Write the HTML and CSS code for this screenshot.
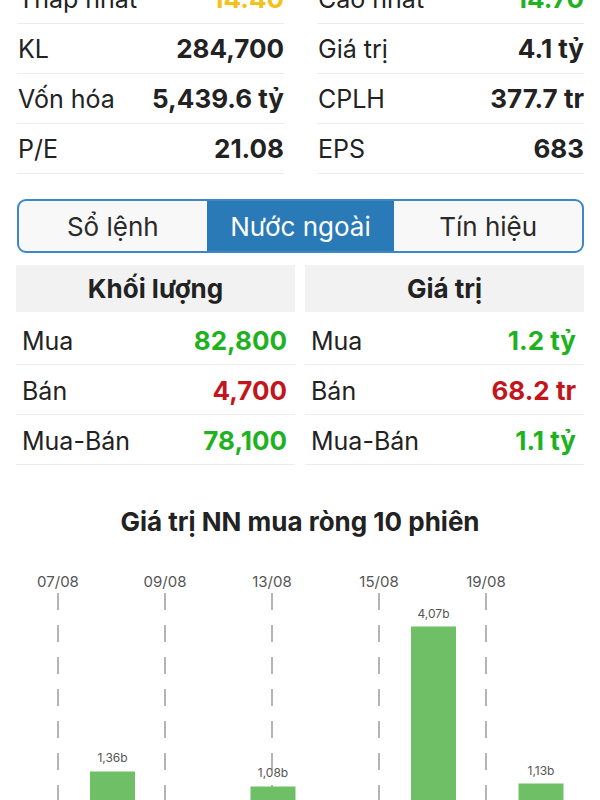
FILE: index.html
```html
<!DOCTYPE html>
<html lang="vi">
<head>
    <meta charset="UTF-8">
    <meta name="viewport" content="width=device-width, initial-scale=1.0">
    <title>Nước ngoài</title>
    <link rel="stylesheet" href="styles.css">
</head>
<body>
    <div class="stats">
        <div class="stat-col">
            <div class="stat-row"><span class="label">Thấp nhất</span><span class="value yellow">14.40</span></div>
            <div class="stat-row"><span class="label">KL</span><span class="value">284,700</span></div>
            <div class="stat-row"><span class="label">Vốn hóa</span><span class="value">5,439.6 tỷ</span></div>
            <div class="stat-row"><span class="label">P/E</span><span class="value">21.08</span></div>
        </div>
        <div class="stat-col">
            <div class="stat-row"><span class="label">Cao nhất</span><span class="value green">14.70</span></div>
            <div class="stat-row"><span class="label">Giá trị</span><span class="value">4.1 tỷ</span></div>
            <div class="stat-row"><span class="label">CPLH</span><span class="value">377.7 tr</span></div>
            <div class="stat-row"><span class="label">EPS</span><span class="value">683</span></div>
        </div>
    </div>

    <div class="tabs">
        <div class="tab">Sổ lệnh</div>
        <div class="tab active">Nước ngoài</div>
        <div class="tab">Tín hiệu</div>
    </div>

    <div class="foreign">
        <div class="foreign-table">
            <div class="foreign-head">Khối lượng</div>
            <div class="foreign-row"><span class="label">Mua</span><span class="value green">82,800</span></div>
            <div class="foreign-row"><span class="label">Bán</span><span class="value red">4,700</span></div>
            <div class="foreign-row"><span class="label">Mua-Bán</span><span class="value green">78,100</span></div>
        </div>
        <div class="foreign-table">
            <div class="foreign-head">Giá trị</div>
            <div class="foreign-row"><span class="label">Mua</span><span class="value green">1.2 tỷ</span></div>
            <div class="foreign-row"><span class="label">Bán</span><span class="value red">68.2 tr</span></div>
            <div class="foreign-row"><span class="label">Mua-Bán</span><span class="value green">1.1 tỷ</span></div>
        </div>
    </div>

    <h3 class="chart-title">Giá trị NN mua ròng 10 phiên</h3>

    <svg class="chart" width="600" height="260" viewBox="0 0 600 260">
        <g class="dates">
            <text x="58" y="47">07/08</text>
            <text x="165" y="47">09/08</text>
            <text x="272" y="47">13/08</text>
            <text x="379" y="47">15/08</text>
            <text x="486" y="47">19/08</text>
        </g>
        <g class="grid">
            <line x1="58" y1="53" x2="58" y2="260"/>
            <line x1="165" y1="53" x2="165" y2="260"/>
            <line x1="272" y1="53" x2="272" y2="260"/>
            <line x1="379" y1="53" x2="379" y2="260"/>
            <line x1="486" y1="53" x2="486" y2="260"/>
        </g>
        <g class="bars">
            <rect x="90" y="231.5" width="45" height="60"/>
            <rect x="250.5" y="246.5" width="45" height="60"/>
            <rect x="411" y="86.5" width="45" height="200"/>
            <rect x="518.5" y="243.5" width="45" height="60"/>
        </g>
        <g class="bar-labels">
            <text x="112.5" y="222">1,36b</text>
            <text x="273" y="237">1,08b</text>
            <text x="433.5" y="78">4,07b</text>
            <text x="541" y="235">1,13b</text>
        </g>
    </svg>
</body>
</html>
```

FILE: styles.css
```css
body {
    margin: 0;
    font-family: Inter, 'Noto Sans', sans-serif;
    color: #222222;
    background: #ffffff;
    width: 600px;
    height: 800px;
    overflow: hidden;
}

.stats {
    display: grid;
    grid-template-columns: 267px 267px;
    column-gap: 33px;
    margin-top: -26px;
    padding-left: 17px;
}

.stat-row {
    display: flex;
    justify-content: space-between;
    align-items: center;
    height: 49px;
    border-bottom: 1px solid #ececec;
    font-size: 25px;
}

.stat-row .label {
    padding-left: 1px;
}

.value {
    font-weight: 700;
    font-size: 26px;
}

.yellow {
    color: #f2c21b;
}

.green {
    color: #1fb21f;
}

.red {
    color: #c2161c;
}

.tabs {
    display: grid;
    grid-template-columns: 1fr 1fr 1fr;
    margin: 25px 16px 0 17px;
    height: 50px;
    border: 2px solid #3c87c4;
    border-radius: 9px;
    overflow: hidden;
    background: #f8f8f8;
}

.tab {
    display: flex;
    justify-content: center;
    align-items: center;
    font-size: 26px;
    color: #2a2a2a;
}

.tab.active {
    background: #2a7ab8;
    color: #ffffff;
}

.foreign {
    display: grid;
    grid-template-columns: 1fr 1fr;
    column-gap: 10px;
    margin: 12px 16px 0 16px;
}

.foreign-head {
    height: 47px;
    margin-bottom: 3px;
    background: #f2f2f2;
    display: flex;
    justify-content: center;
    align-items: center;
    font-size: 26px;
    font-weight: 700;
}

.foreign-row {
    display: flex;
    justify-content: space-between;
    align-items: center;
    padding: 2px 8px 0 6px;
    box-sizing: border-box;
    height: 50px;
    border-bottom: 1px solid #ececec;
    font-size: 25px;
}

.chart-title {
    margin: 42px 0 3px;
    line-height: 30px;
    font-size: 26px;
    font-weight: 700;
    text-align: center;
}

.chart {
    display: block;
}

.dates text {
    font-size: 15px;
    fill: #555555;
    text-anchor: middle;
}

.grid line {
    stroke: #b4b4b4;
    stroke-width: 2;
    stroke-dasharray: 17 15;
}

.bars rect {
    fill: #6fbf67;
}

.bar-labels text {
    font-size: 12px;
    fill: #555555;
    text-anchor: middle;
}
```
